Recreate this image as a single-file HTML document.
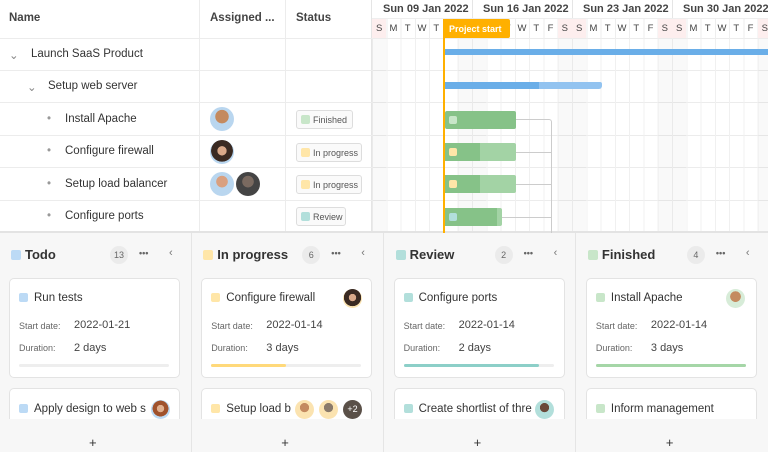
<!DOCTYPE html><html><head><style>
*{box-sizing:border-box;margin:0;padding:0}
body{width:768px;height:452px;overflow:hidden;font-family:"Liberation Sans",sans-serif;color:#333;background:#fff;position:relative}
.a{position:absolute}
.t{font-size:11.5px;color:#333;white-space:nowrap}
.wk{font-size:11px;font-weight:bold;color:#444;white-space:nowrap}
.hl{border-bottom:1px solid #ececec}
.av{position:absolute;width:24px;height:24px;border-radius:50%}
.st{position:absolute;height:19px;border:1px solid #ddd;border-radius:3px;font-size:9px;color:#555;padding:4px 0 0 16px;background:#fafafa;white-space:nowrap;overflow:hidden}
.st i{position:absolute;left:4px;top:4px;width:9px;height:9px;border-radius:2px}
.col{position:absolute;top:233px;width:192px;height:219px;background:#f7f7f7;border-right:1px solid #e5e5e5}
.card{position:absolute;left:9px;width:171px;background:#fff;border:1px solid #e3e3e3;border-radius:5px}
.sq{display:inline-block;width:9px;height:9px;border-radius:2px;margin-right:6px;vertical-align:-1px}
.lbl{font-size:9px;color:#666}
.val{font-size:11px;color:#444}
</style></head><body>
<div class="a" style="left:0;top:0;width:372px;height:233px;border-right:1px solid #e5e5e5"></div>
<div class="a" style="left:199px;top:0;width:1px;height:233px;background:#ececec"></div>
<div class="a" style="left:285px;top:0;width:1px;height:233px;background:#ececec"></div>
<div class="a hl" style="left:0;top:0;width:768px;height:39px"></div>
<div class="a hl" style="left:0;top:0;width:768px;height:71px"></div>
<div class="a hl" style="left:0;top:0;width:768px;height:103px"></div>
<div class="a hl" style="left:0;top:0;width:768px;height:136px"></div>
<div class="a hl" style="left:0;top:0;width:768px;height:168px"></div>
<div class="a hl" style="left:0;top:0;width:768px;height:201px"></div>
<div class="a" style="left:0;top:231px;width:768px;height:2px;background:#e3e3e3"></div>
<div class="a t" style="left:9px;top:12px;font-weight:bold;color:#444">Name</div>
<div class="a t" style="left:210px;top:12px;font-weight:bold;color:#444">Assigned ...</div>
<div class="a t" style="left:296px;top:12px;font-weight:bold;color:#444">Status</div>
<div class="a t" style="left:9px;top:48px;color:#888">&#8964;</div>
<div class="a t" style="left:31px;top:48px">Launch SaaS Product</div>
<div class="a t" style="left:27px;top:80px;color:#888">&#8964;</div>
<div class="a t" style="left:48px;top:80px">Setup web server</div>
<div class="a t" style="left:47px;top:113px;color:#999">•</div><div class="a t" style="left:65px;top:113px">Install Apache</div>
<div class="a t" style="left:47px;top:145px;color:#999">•</div><div class="a t" style="left:65px;top:145px">Configure firewall</div>
<div class="a t" style="left:47px;top:178px;color:#999">•</div><div class="a t" style="left:65px;top:178px">Setup load balancer</div>
<div class="a t" style="left:47px;top:210px;color:#999">•</div><div class="a t" style="left:65px;top:210px">Configure ports</div>
<div class="av" style="left:210px;top:107px;background:radial-gradient(circle at 50% 40%,#c48a5f 35%,#b9d6ef 37%)"></div>
<div class="av" style="left:210px;top:140px;background:radial-gradient(circle at 50% 45%,#d9a98a 25%,#3a2a22 27%,#3a2a22 60%,#b9d6ef 62%)"></div>
<div class="av" style="left:210px;top:172px;background:radial-gradient(circle at 50% 40%,#d9a080 30%,#b9d6ef 32%)"></div>
<div class="av" style="left:236px;top:172px;background:radial-gradient(circle at 50% 40%,#7a6a60 30%,#444 32%)"></div>
<div class="st" style="left:296px;top:110px;width:57px"><i style="background:#c8e6c9"></i>Finished</div>
<div class="st" style="left:296px;top:143px;width:66px"><i style="background:#ffe6a8"></i>In progress</div>
<div class="st" style="left:296px;top:175px;width:66px"><i style="background:#ffe6a8"></i>In progress</div>
<div class="st" style="left:296px;top:207px;width:50px"><i style="background:#b2dfdb"></i>Review</div>
<div class="a" style="left:372px;top:39px;width:396px;height:192px;background:repeating-linear-gradient(90deg,#f0f0f0 0 1px,transparent 1px 14.2857px)"></div>
<div class="a" style="left:372px;top:39px;width:14px;height:192px;background:rgba(0,0,0,.025)"></div>
<div class="a" style="left:458px;top:39px;width:28px;height:192px;background:rgba(0,0,0,.025)"></div>
<div class="a" style="left:558px;top:39px;width:28px;height:192px;background:rgba(0,0,0,.025)"></div>
<div class="a" style="left:658px;top:39px;width:28px;height:192px;background:rgba(0,0,0,.025)"></div>
<div class="a" style="left:758px;top:39px;width:10px;height:192px;background:rgba(0,0,0,.025)"></div>
<div class="a" style="left:372px;top:18px;width:396px;height:21px;background:repeating-linear-gradient(90deg,#eee 0 1px,transparent 1px 14.2857px)"></div>
<div class="a" style="left:372px;top:18px;width:14px;height:20px;background:#fdeeee"></div>
<div class="a" style="left:558px;top:18px;width:28px;height:20px;background:#fdeeee"></div>
<div class="a" style="left:658px;top:18px;width:28px;height:20px;background:#fdeeee"></div>
<div class="a" style="left:758px;top:18px;width:10px;height:20px;background:#fdeeee"></div>
<div class="a" style="left:372px;top:18px;width:396px;height:1px;background:#eee"></div>
<div class="a" style="left:472px;top:0;width:1px;height:18px;background:#e5e5e5"></div>
<div class="a" style="left:572px;top:0;width:1px;height:18px;background:#e5e5e5"></div>
<div class="a" style="left:672px;top:0;width:1px;height:18px;background:#e5e5e5"></div>
<div class="a wk" style="left:383px;top:3px">Sun 09 Jan 2022</div>
<div class="a wk" style="left:483px;top:3px">Sun 16 Jan 2022</div>
<div class="a wk" style="left:583px;top:3px">Sun 23 Jan 2022</div>
<div class="a wk" style="left:683px;top:3px">Sun 30 Jan 2022</div>
<div id="days"></div>
<script>
var d="SMTWTFS",h="";for(var i=0;i<28;i++){if(i>=5&&i<=7)continue;h+='<div class="a" style="left:'+(372+i*14.2857)+'px;top:23px;width:14.3px;text-align:center;font-size:9.5px;color:#444">'+d[i%7]+'</div>';}document.getElementById('days').innerHTML=h;
</script>
<div class="a" style="left:443px;top:19px;width:67px;height:19px;background:#ffb000;color:#fff;font-size:9px;font-weight:bold;padding:5px 0 0 6px;border-radius:0 2px 2px 0">Project start</div>
<div class="a" style="left:443px;top:38px;width:2px;height:195px;background:#ffb000"></div>
<div class="a" style="left:445px;top:49px;width:323px;height:6px;background:#6aaee8"></div>
<div class="a" style="left:445px;top:82px;width:157px;height:7px;background:#92c3f0;border-radius:0 2px 3px 0"></div>
<div class="a" style="left:445px;top:82px;width:94px;height:7px;background:#6aaee8"></div>
<div class="a" style="left:445px;top:111px;width:71px;height:18px;background:#86c288;border-radius:2px"></div>
<div class="a" style="left:445px;top:143px;width:71px;height:18px;background:#a3d3a5;border-radius:2px"></div>
<div class="a" style="left:445px;top:143px;width:35px;height:18px;background:#86c288"></div>
<div class="a" style="left:445px;top:175px;width:71px;height:18px;background:#a3d3a5;border-radius:2px"></div>
<div class="a" style="left:445px;top:175px;width:35px;height:18px;background:#86c288"></div>
<div class="a" style="left:445px;top:208px;width:57px;height:18px;background:#a3d3a5;border-radius:2px"></div>
<div class="a" style="left:445px;top:208px;width:52px;height:18px;background:#86c288"></div>
<div class="a" style="left:449px;top:116px;width:8px;height:8px;border-radius:2px;background:#c8e6c9"></div>
<div class="a" style="left:449px;top:148px;width:8px;height:8px;border-radius:2px;background:#ffe6a8"></div>
<div class="a" style="left:449px;top:180px;width:8px;height:8px;border-radius:2px;background:#ffe6a8"></div>
<div class="a" style="left:449px;top:213px;width:8px;height:8px;border-radius:2px;background:#b2dfdb"></div>
<div class="a" style="left:516px;top:119px;width:36px;height:114px;border:1px solid #ccc;border-left:none;border-bottom:none;border-radius:0 3px 0 0"></div>
<div class="a" style="left:516px;top:152px;width:36px;height:1px;background:#ccc"></div>
<div class="a" style="left:516px;top:184px;width:36px;height:1px;background:#ccc"></div>
<div class="a" style="left:502px;top:217px;width:50px;height:1px;background:#ccc"></div>
<div class="col" style="left:0"></div>
<div class="col" style="left:192px"></div>
<div class="col" style="left:384px"></div>
<div class="col" style="left:576px;border-right:none"></div>
<div id="kb"></div>
<script>
var cols=[["Todo","#bcdaf5","13","Run tests","2022-01-21","2 days",0,"Apply design to web s"],
["In progress","#ffe6a8","6","Configure firewall","2022-01-14","3 days",50,"Setup load b"],
["Review","#b2dfdb","2","Configure ports","2022-01-14","2 days",90,"Create shortlist of thre"],
["Finished","#c8e6c9","4","Install Apache","2022-01-14","3 days",100,"Inform management"]];
var bar=["#eee","#ffd97a","#8ccfc8","#a5d6a7"],h="";
cols.forEach(function(c,i){var x=i*192.3;
h+='<div class="a" style="left:'+(x+11)+'px;top:250px;width:10px;height:10px;border-radius:2px;background:'+c[1]+'"></div>';
h+='<div class="a" style="left:'+(x+25)+'px;top:247px;font-size:13px;font-weight:bold;color:#333">'+c[0]+'</div>';
h+='<div class="a" style="left:'+(x+110)+'px;top:246px;width:18px;height:18px;border-radius:50%;background:#ebebeb;font-size:9px;color:#666;text-align:center;line-height:18px">'+c[2]+'</div>';
h+='<div class="a" style="left:'+(x+139)+'px;top:248px;font-size:9px;color:#666;font-weight:bold">•••</div>';
h+='<div class="a" style="left:'+(x+169)+'px;top:247px;font-size:11px;color:#777">&#8249;</div>';
h+='<div class="card" style="left:'+(x+9)+'px;top:278px;height:100px"></div>';
h+='<div class="a" style="left:'+(x+19)+'px;top:292px;font-size:11.5px;color:#333;white-space:nowrap"><span class="sq" style="background:'+c[1]+'"></span>'+c[3]+'</div>';
h+='<div class="a lbl" style="left:'+(x+19)+'px;top:321px">Start date:</div><div class="a val" style="left:'+(x+74)+'px;top:319px">'+c[4]+'</div>';
h+='<div class="a lbl" style="left:'+(x+19)+'px;top:343px">Duration:</div><div class="a val" style="left:'+(x+74)+'px;top:342px">'+c[5]+'</div>';
h+='<div class="a" style="left:'+(x+19)+'px;top:364px;width:150px;height:3px;border-radius:2px;background:#eee"><div style="height:3px;border-radius:2px;width:'+c[6]+'%;background:'+bar[i]+'"></div></div>';
h+='<div class="a" style="left:'+(x+9)+'px;top:388px;width:171px;height:31px;background:#fff;border:1px solid #e3e3e3;border-bottom:none;border-radius:5px 5px 0 0"></div>';
h+='<div class="a" style="left:'+(x+19)+'px;top:403px;font-size:11.5px;color:#333;white-space:nowrap"><span class="sq" style="background:'+c[1]+'"></span>'+c[7]+'</div>';
h+='<div class="a" style="left:'+(x+89)+'px;top:435px;font-size:13px;color:#333">+</div>';});
document.getElementById('kb').innerHTML=h;
</script>
<div class="av" style="left:343px;top:289px;width:19px;height:19px;background:radial-gradient(circle at 50% 45%,#d9a98a 25%,#3a2a22 27%,#3a2a22 60%,#fbe3b0 62%)"></div>
<div class="av" style="left:726px;top:289px;width:19px;height:19px;background:radial-gradient(circle at 50% 40%,#c48a5f 35%,#d7ecd8 37%)"></div>
<div class="av" style="left:151px;top:400px;width:19px;height:19px;background:radial-gradient(circle at 50% 45%,#e0b090 25%,#a0522d 27%,#a0522d 55%,#bcdaf5 57%)"></div>
<div class="av" style="left:295px;top:400px;width:19px;height:19px;background:radial-gradient(circle at 50% 40%,#c48a60 30%,#fbe3b0 32%)"></div>
<div class="av" style="left:319px;top:400px;width:19px;height:19px;background:radial-gradient(circle at 50% 40%,#8a7a6a 30%,#fbe3b0 32%)"></div>
<div class="av" style="left:343px;top:400px;width:19px;height:19px;background:#5a5048;color:#fff;font-size:9px;text-align:center;line-height:19px">+2</div>
<div class="av" style="left:535px;top:400px;width:19px;height:19px;background:radial-gradient(circle at 50% 40%,#6a4a3a 30%,#b2dfdb 32%)"></div>
</body></html>
